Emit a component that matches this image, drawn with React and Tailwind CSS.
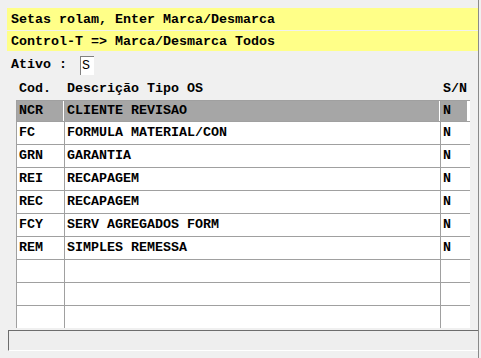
import React from 'react';

const ROWS = [
  ['NCR', 'CLIENTE REVISAO', 'N'],
  ['FC', 'FORMULA MATERIAL/CON', 'N'],
  ['GRN', 'GARANTIA', 'N'],
  ['REI', 'RECAPAGEM', 'N'],
  ['REC', 'RECAPAGEM', 'N'],
  ['FCY', 'SERV AGREGADOS FORM', 'N'],
  ['REM', 'SIMPLES REMESSA', 'N'],
  ['', '', ''],
  ['', '', ''],
  ['', '', ''],
];

const Row = ({ cells, selected, first, last }) => {
  const h = first ? 'h-[21px]' : last ? 'h-[22px]' : 'h-[23px]';
  const bb = last ? '' : 'border-b border-[#a0a0a0]';
  return (
    <div className={`grid grid-cols-[48px_376px_30px] ${h} ${bb}`}>
      {cells.map((c, i) => (
        <div key={i} className="border-l border-[#a0a0a0] flex">
          <div
            className={`flex-1 flex items-center pl-[2px] ${i === 2 ? 'mr-[3px]' : 'mr-px'} ${
              selected ? 'bg-[#a6a6a6]' : ''
            }`}
          >
            {c}
          </div>
        </div>
      ))}
    </div>
  );
};

export default function App() {
  return (
    <div
      className="w-[481px] h-[358px] bg-[#f0f0f0] flex text-black text-[13.33px] font-bold overflow-hidden"
      style={{ fontFamily: '"Liberation Mono", monospace' }}
    >
      <div className="w-[478px] flex flex-col pt-[8px]">
        {/* hint bars */}
        <div className="pl-[7px]">
          <div className="h-[22px] bg-[#ffff88] flex items-center pl-[4px] pt-[2px]">
            Setas rolam, Enter Marca/Desmarca
          </div>
          <div className="h-[20px] mt-px bg-[#ffff88] flex items-center pl-[4px] pt-px">
            Control-T =&gt; Marca/Desmarca Todos
          </div>
        </div>

        {/* ativo */}
        <div className="h-[20px] mt-[4px] flex items-center pl-[11px]">
          <span>Ativo :</span>
          <div className="ml-[13px] w-[14px] h-[19px] bg-white border-l border-t border-[#808080] flex items-center pl-px font-normal">
            S
          </div>
        </div>

        {/* header */}
        <div className="h-[22px] mt-[3px] grid grid-cols-[48px_376px_30px] ml-[16px] items-center">
          <span className="pl-[3px]">Cod.</span>
          <span className="pl-[3px]">Descrição Tipo OS</span>
          <span className="pl-[3px]">S/N</span>
        </div>

        {/* table */}
        <div className="ml-[16px] w-[454px] h-[228px] bg-white border-t border-[#a0a0a0] overflow-hidden">
          {ROWS.map((r, i) => (
            <Row key={i} cells={r} selected={i === 0} first={i === 0} last={i === ROWS.length - 1} />
          ))}
        </div>

        {/* status bar */}
        <div className="mt-[2px] ml-[8px] h-[21px] bg-[#eeeeee] border-l border-t border-[#6d6d6d] border-b border-b-white" />
      </div>
      <div className="w-px bg-[#8a8a8a]" />
    </div>
  );
}
